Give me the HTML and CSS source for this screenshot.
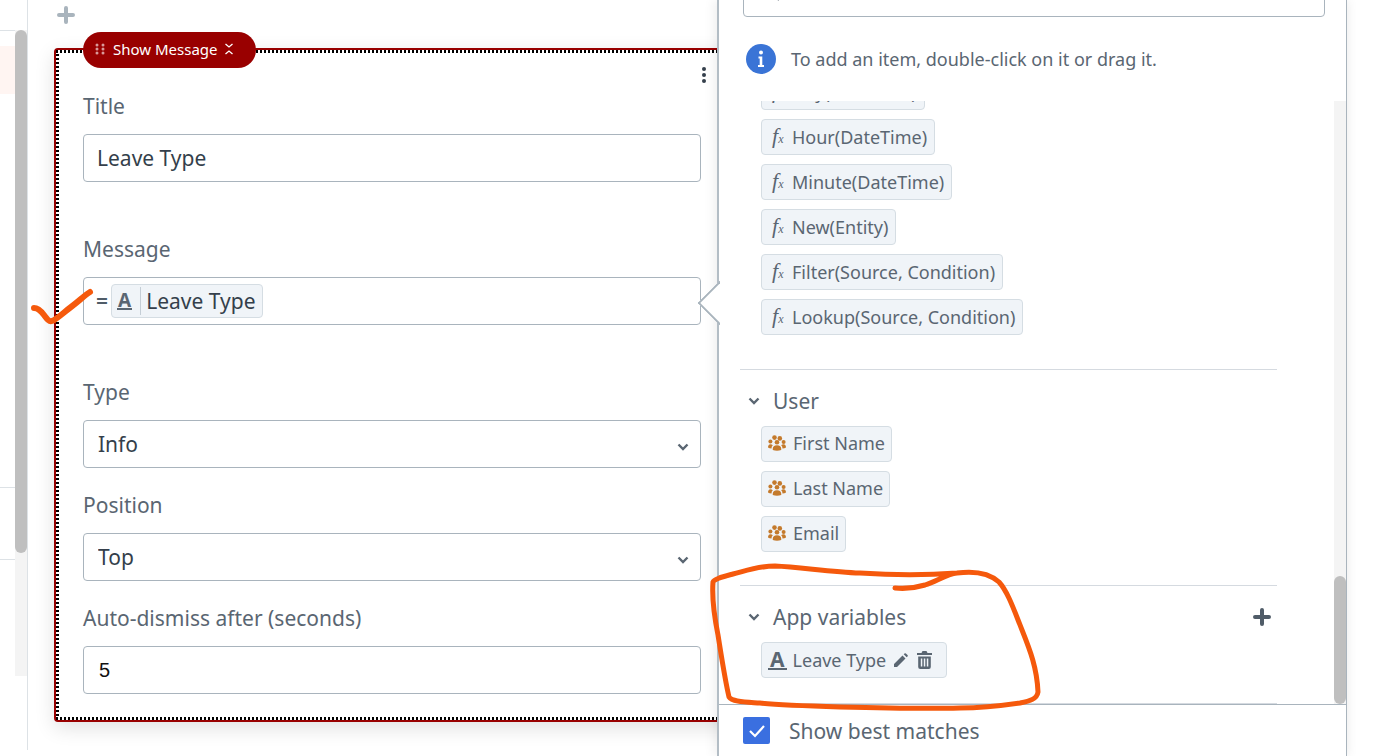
FILE: index.html
```html
<!DOCTYPE html>
<html lang="en">
<head>
    <meta charset="UTF-8">
    <meta name="viewport" content="width=device-width, initial-scale=1.0">
    <title>Show Message</title>
    <link rel="stylesheet" href="styles.css">
</head>
<body>
    <div class="page">
        <div class="rail">
            <div class="rail-rows">
                <div class="rail-row rail-top"></div>
                <div class="rail-active"></div>
                <div class="rail-row rail-mid"></div>
                <div class="rail-row rail-low"></div>
            </div>
            <div class="rail-bar"><div class="rail-thumb"></div></div>
        </div>

        <div class="canvas">
            <div class="add-row">
                <svg class="add-icon" width="18" height="18" viewBox="0 0 18 18"><path d="M9 2v14M2 9h14" stroke="#a9b4bd" stroke-width="4" stroke-linecap="round"/></svg>
            </div>
            <div class="card">
                <div class="pill">
                    <svg width="10" height="12" viewBox="0 0 10 12" fill="#d99a9a"><circle cx="2" cy="2" r="1.5"/><circle cx="8" cy="2" r="1.5"/><circle cx="2" cy="6" r="1.5"/><circle cx="8" cy="6" r="1.5"/><circle cx="2" cy="10" r="1.5"/><circle cx="8" cy="10" r="1.5"/></svg>
                    <span>Show Message</span>
                    <svg width="10" height="12" viewBox="0 0 10 12" fill="none" stroke="#fff" stroke-width="1.3"><path d="M1.500 1 5 4l3.500-3M1.500 11 5 8l3.500 3"/></svg>
                </div>
                <div class="card-inner">
                    <svg class="dots" width="6" height="18" viewBox="0 0 6 18" fill="#343f4b"><circle cx="3" cy="3" r="2"/><circle cx="3" cy="9" r="2"/><circle cx="3" cy="15" r="2"/></svg>

                    <div class="field wide">
                        <label>Title</label>
                        <input class="text-input" type="text" value="Leave Type">
                    </div>
                    <div class="field wide">
                        <label>Message</label>
                        <div class="text-input expr">
                            <span class="eq">=</span>
                            <span class="expr-chip"><span class="a-icon">A</span><span class="expr-name">Leave Type</span></span>
                        </div>
                    </div>
                    <div class="field">
                        <label>Type</label>
                        <div class="select-wrap">
                            <select class="text-input select"><option>Info</option></select>
                            <svg class="caret" width="12" height="8" viewBox="0 0 12 8" fill="none" stroke="#5a6672" stroke-width="2.400"><path d="m1.500 1.500 4.500 4.500 4.500-4.500"/></svg>
                        </div>
                    </div>
                    <div class="field">
                        <label>Position</label>
                        <div class="select-wrap">
                            <select class="text-input select"><option>Top</option></select>
                            <svg class="caret" width="12" height="8" viewBox="0 0 12 8" fill="none" stroke="#5a6672" stroke-width="2.400"><path d="m1.500 1.500 4.500 4.500 4.500-4.500"/></svg>
                        </div>
                    </div>
                    <div class="field">
                        <label>Auto-dismiss after (seconds)</label>
                        <input class="text-input number" type="text" value="5">
                    </div>
                </div>
            </div>
        </div>

        <div class="panel">
            <div class="panel-arrow"></div>
            <div class="search">
                <svg width="16" height="16" viewBox="0 0 16 16" fill="none" stroke="#5a6672" stroke-width="2"><circle cx="6.500" cy="6.500" r="5"/><path d="m10 10 5 5"/></svg>
                <span>Search...</span>
            </div>
            <div class="hint">
                <svg width="30" height="30" viewBox="0 0 30 30"><circle cx="15" cy="15" r="15" fill="#3a74d6"/><circle cx="15" cy="8.500" r="2" fill="#fff"/><path d="M12.500 12.500h3.800v8.500h1.700v2h-6v-2h1.700v-6.500h-1.200z" fill="#fff"/></svg>
                <span>To add an item, double-click on it or drag it.</span>
            </div>

            <div class="list-wrap">
                <div class="list">
                    <div class="section first">
                        <div class="chip"><span class="fx">f<i>x</i></span>Day(DateTime)</div>
                        <div class="chip"><span class="fx">f<i>x</i></span>Hour(DateTime)</div>
                        <div class="chip"><span class="fx">f<i>x</i></span>Minute(DateTime)</div>
                        <div class="chip"><span class="fx">f<i>x</i></span>New(Entity)</div>
                        <div class="chip"><span class="fx">f<i>x</i></span>Filter(Source, Condition)</div>
                        <div class="chip"><span class="fx">f<i>x</i></span>Lookup(Source, Condition)</div>
                    </div>
                    <div class="section user">
                        <div class="section-head">
                            <svg width="12" height="8" viewBox="0 0 12 8" fill="none" stroke="#5a6672" stroke-width="2.400"><path d="m1.500 1.500 4.500 4.500 4.500-4.500"/></svg>
                            <span>User</span>
                        </div>
                        <div class="chip"><svg class="users" width="18" height="16" viewBox="0 0 18 16" fill="#c47a2c"><use href="#users-shape"/></svg>First Name</div>
                        <div class="chip"><svg class="users" width="18" height="16" viewBox="0 0 18 16" fill="#c47a2c"><use href="#users-shape"/></svg>Last Name</div>
                        <div class="chip"><svg class="users" width="18" height="16" viewBox="0 0 18 16" fill="#c47a2c"><use href="#users-shape"/></svg>Email</div>
                    </div>
                    <div class="section vars">
                        <div class="section-head">
                            <svg width="12" height="8" viewBox="0 0 12 8" fill="none" stroke="#5a6672" stroke-width="2.400"><path d="m1.500 1.500 4.500 4.500 4.500-4.500"/></svg>
                            <span>App variables</span>
                            <svg class="head-add" width="18" height="18" viewBox="0 0 18 18"><path d="M9 2v14M2 9h14" stroke="#505c68" stroke-width="4" stroke-linecap="round"/></svg>
                        </div>
                        <div class="chip var-chip">
                            <span class="a-icon big">A</span>Leave Type
                            <svg class="pencil" width="15" height="15" viewBox="0 0 15 15" fill="#5a6672"><path d="M1 11 9.500 2.500l3 3L4 14H1zM10.700 1.300 11.500.5q.7-.6 1.400 0l1.600 1.600q.6.7 0 1.400l-.8.800z"/></svg>
                            <svg class="trash" width="15" height="18" viewBox="0 0 15 18" fill="#5a6672"><path d="M0 2h4.500l1-2h4l1 2H15v2H0zM1.200 5.500h12.600v10.500q0 2-2 2H3.200q-2 0-2-2zm2.600 2v8h1.500v-8zm3 0v8h1.500v-8zm3 0v8h1.500v-8z"/></svg>
                        </div>
                    </div>
                </div>
                <div class="list-bar"><div class="list-thumb"></div></div>
            </div>

            <div class="panel-foot">
                <span class="check">
                    <svg width="18" height="14" viewBox="0 0 18 14" fill="none" stroke="#fff" stroke-width="2.200"><path d="m2 7 5 5L16 2"/></svg>
                </span>
                <span>Show best matches</span>
            </div>
        </div>
    </div>

    <svg class="defs" width="0" height="0">
        <symbol id="users-shape" viewBox="0 0 18 16">
            <circle cx="6.500" cy="2.600" r="2.300"/><circle cx="11.800" cy="3.400" r="2.300"/><circle cx="2.400" cy="6.500" r="2"/><circle cx="15.600" cy="7" r="2"/><circle cx="9" cy="7.200" r="2.300"/>
            <path d="M4.800 15q-.6-4.800 4.200-4.800t4.200 4.800q-4.200 1.500-8.400 0zM0 12.500q0-3 2.400-3.300 1.600 0 2.400 1-1.300 1-1.300 3.300-2.200 0-3.500-1zM18 12.500q0-3-2.400-3.300-1.600 0-2.400 1 1.300 1 1.300 3.300 2.200 0 3.500-1z"/>
        </symbol>
    </svg>

    <svg class="scribble" width="1384" height="756" viewBox="0 0 1384 756" fill="none" stroke="#f5590c" stroke-linecap="round" stroke-linejoin="round">
        <path stroke-width="6" d="M34 308C38 308 41 311 44 315C47 319 49 322 52 321C57 319 63 313 71 307C79 301 85 295 90 292"/>
        <path stroke-width="5" d="M895 588C905 589 915 588 925 585C937 581 947 574 957 573C972 571 988 572 999 582C1008 592 1014 610 1022 630C1030 650 1037 668 1038 692C1037 699 1030 701 1020 703C1000 706 985 708 960 708C920 709 880 708 840 707C810 706 780 705 760 703C745 702 732 702 729 697C725 680 722 660 718 635C714 615 712 595 713 582C714 579 722 577 733 574C745 571 758 566 775 566C800 567 830 572 860 573C890 575 930 575 957 573"/>
    </svg>
</body>
</html>
```

FILE: styles.css
```css
* {
    box-sizing: border-box;
}

html, body {
    margin: 0;
    height: 100%;
    overflow: hidden;
    background: #fff;
}

body {
    font-family: "Noto Sans", "Liberation Sans", sans-serif;
    color: #5a6672;
}

.page {
    display: flex;
    width: 1384px;
    height: 756px;
    overflow: hidden;
}

/* left rail */
.rail {
    display: flex;
    flex: none;
    width: 28px;
    height: 750px;
    border-right: 1px solid #dde2e6;
}

.rail-rows {
    width: 15px;
}

.rail-row {
    border-bottom: 1px solid #dde2e6;
}

.rail-top {
    height: 31px;
}

.rail-active {
    height: 48px;
    margin-top: 15px;
    background: #fff5f2;
}

.rail-mid {
    height: 394px;
}

.rail-low {
    height: 72px;
}

.rail-bar {
    width: 12px;
    height: 646px;
    margin-top: 30px;
    background: #f4f4f4;
}

.rail-thumb {
    height: 523px;
    border-radius: 6px;
    background: #bfbfbf;
}

/* canvas */
.canvas {
    flex: none;
    width: 690px;
    padding-left: 26px;
}

.add-row {
    height: 48px;
    padding: 6px 0 0 3px;
}

.add-icon {
    display: block;
}

.card {
    position: relative;
    width: 690px;
    height: 674px;
    border: 2px solid #990000;
    border-radius: 4px;
    box-shadow: 0 6px 20px rgba(0, 0, 0, 0.12);
}

.card-inner {
    position: relative;
    height: 100%;
    padding: 43px 0 0 27px;
    background:
        repeating-linear-gradient(90deg, #000 0 2.500px, #fff 2.500px 4px) top / 100% 3px no-repeat,
        repeating-linear-gradient(90deg, #000 0 2.500px, #fff 2.500px 4px) bottom / 100% 3px no-repeat,
        repeating-linear-gradient(0deg, #000 0 2.500px, #fff 2.500px 4px) left / 3px 100% no-repeat,
        #fff;
}

.pill {
    position: absolute;
    z-index: 1;
    top: -18px;
    left: 27px;
    display: flex;
    align-items: center;
    gap: 8px;
    width: 173px;
    height: 36px;
    padding: 0 0 3px 12px;
    border-radius: 18px;
    background: #990000;
    color: #fff;
    font-size: 15px;
}

.pill svg:last-child {
    margin-left: -2px;
}

.dots {
    position: absolute;
    top: 16px;
    left: 645px;
}

.field {
    width: 618px;
    margin-bottom: 24px;
}

.field.wide {
    margin-bottom: 54px;
}

.field label {
    display: block;
    height: 27px;
    margin-bottom: 14px;
    font-size: 21px;
    line-height: 27px;
}

.text-input {
    display: block;
    width: 618px;
    height: 48px;
    padding: 0 13px;
    border: 1px solid #a9b4bd;
    border-radius: 4px;
    background: #fff;
    color: #343f4b;
    font-family: "Noto Sans", "Liberation Sans", sans-serif;
    font-size: 21px;
}

.number {
    padding-left: 15px;
    color: #111;
    font-family: "Liberation Sans", sans-serif;
    font-size: 20px;
}

.select {
    padding-left: 14px;
    appearance: none;
}

.select-wrap {
    position: relative;
}

.caret {
    position: absolute;
    top: 23px;
    right: 12px;
}

.expr {
    display: flex;
    align-items: center;
    gap: 3px;
    padding-left: 12px;
}

.eq {
    color: #505c68;
    font-weight: 600;
}

.expr-chip {
    display: flex;
    align-items: center;
    height: 34px;
    padding: 0 6px 0 5px;
    border: 1px solid #d5dde3;
    border-radius: 4px;
    background: #f0f4f8;
}

.a-icon {
    display: block;
    height: 18px;
    padding: 0 1px;
    border-bottom: 2px solid #5a6672;
    color: #5a6672;
    font-size: 19px;
    font-weight: 700;
    line-height: 16px;
}

.expr-name {
    margin-left: 8px;
    padding-left: 5px;
    border-left: 1px solid #c5ced6;
    line-height: 28px;
}

/* right panel */
.panel {
    position: relative;
    z-index: 2;
    flex: none;
    display: flex;
    flex-direction: column;
    width: 630px;
    height: 756px;
    margin-left: -1px;
    border-left: 2px solid #b3bdc5;
    border-right: 1px solid #a9b4bd;
    background: #fff;
    box-shadow: -4px 0 10px rgba(0, 0, 0, 0.06), 4px 0 8px rgba(0, 0, 0, 0.04);
}

.panel-arrow {
    position: absolute;
    z-index: 3;
    top: 287px;
    left: -15px;
    width: 32px;
    height: 32px;
    border-left: 2px solid #a9b4bd;
    border-bottom: 2px solid #a9b4bd;
    background: #fff;
    transform: rotate(45deg);
    clip-path: polygon(0 0, 100% 100%, 0 100%);
}

.search {
    flex: none;
    display: flex;
    align-items: center;
    gap: 8px;
    width: 582px;
    height: 48px;
    margin: -31px 0 0 24px;
    padding-left: 20px;
    border: 1px solid #a9b4bd;
    border-radius: 4px;
    color: #7b8691;
    font-size: 18px;
}

.hint {
    flex: none;
    display: flex;
    align-items: center;
    gap: 15px;
    height: 84px;
    padding-left: 27px;
    font-size: 18px;
}

.list-wrap {
    flex: none;
    display: flex;
    height: 603px;
}

.list {
    width: 615px;
    height: 603px;
    overflow: hidden;
}

.list-bar {
    display: flex;
    align-items: flex-end;
    width: 12px;
    background: #f4f4f4;
}

.list-thumb {
    width: 12px;
    height: 128px;
    border-radius: 6px;
    background: #bfbfbf;
}

.section {
    width: 537px;
    margin-left: 21px;
    padding: 17px 0 0 21px;
    border-bottom: 1px solid #d5dae0;
}

.section.first {
    height: 296px;
    margin-top: -27px;
    padding-top: 0;
}

.section.user {
    height: 216px;
}

.section.vars {
    position: relative;
    height: 118px;
}

.section-head {
    display: flex;
    align-items: center;
    height: 27px;
    margin: 0 0 12px -13px;
    font-size: 21px;
}

.section-head span {
    margin-left: 13px;
}

.head-add {
    position: absolute;
    top: 22px;
    right: 6px;
}

.chip {
    display: flex;
    width: fit-content;
    align-items: center;
    height: 36px;
    margin-bottom: 9px;
    padding: 0 6px;
    border: 1px solid #d5dde3;
    border-radius: 4px;
    background: #f0f4f8;
    font-size: 18px;
    white-space: nowrap;
}

.section.first .chip {
    padding-right: 7px;
}

.section.user .chip {
    padding-bottom: 2px;
}

.fx {
    width: 24px;
    padding-left: 4px;
    color: #5a6672;
    font-family: "Liberation Serif", serif;
    font-size: 22px;
    font-style: italic;
    line-height: 22px;
}

.fx i {
    font-size: 12px;
}

.users {
    margin-right: 7px;
}

.a-icon.big {
    height: 19px;
    margin: 0 6px 0 0;
    padding: 0 2px;
    font-size: 21px;
    line-height: 17px;
}

.pencil {
    margin-left: 7px;
}

.trash {
    margin: 0 8px 0 9px;
}

.panel-foot {
    flex: 1;
    display: flex;
    align-items: center;
    gap: 19px;
    padding-left: 24px;
    border-top: 1px solid #a9b4bd;
    font-size: 21px;
}

.check {
    display: flex;
    align-items: center;
    justify-content: center;
    width: 27px;
    height: 27px;
    border-radius: 2px;
    background: #3a6fe0;
}

.defs {
    position: absolute;
}

.scribble {
    position: absolute;
    z-index: 5;
    top: 0;
    left: 0;
    pointer-events: none;
}
```
